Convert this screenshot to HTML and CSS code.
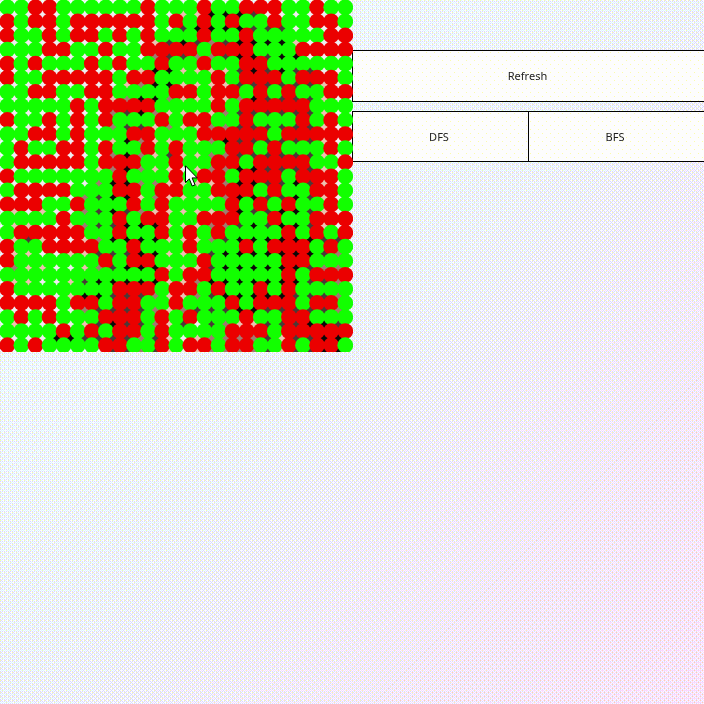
FILE: index.html
```html
<!DOCTYPE html>
<html lang="en">
<head>
<meta charset="utf-8">
<title>Maze search</title>
<link rel="stylesheet" href="styles.css">
</head>
<body>
<canvas id="backdrop" class="backdrop" width="704" height="704"></canvas>
<main class="app">
  <section class="board">
    <svg id="grid" class="grid" viewBox="0 0 353 352" width="353" height="352"></svg>
    <svg class="cursor" width="14" height="22" viewBox="0 0 14 22"><path d="M.5.8V17.5L4.3 13.9 7.2 21 10 19.8 7.1 12.9H12.2Z" fill="#fff" stroke="#000"/></svg>
  </section>
  <aside class="controls">
    <button class="btn">Refresh</button>
    <div class="row">
      <button class="btn">DFS</button>
      <button class="btn">BFS</button>
    </div>
  </aside>
</main>
<script src="grid.js"></script>
</body>
</html>
```
FILE: styles.css
```css
* { box-sizing: border-box; }
html, body { margin: 0; height: 100%; overflow: hidden; }
body {
  background: linear-gradient(135deg, #f0ffff 0%, #f0f0fa 50%, #fbe4f6 100%);
}
.backdrop { position: absolute; left: 0; top: 0; }
.app { position: relative; display: flex; width: 704px; height: 704px; }
.board { position: relative; z-index: 1; width: 352px; height: 352px; }
.grid { display: block; }
.cursor { position: absolute; left: 185px; top: 165px; }
.controls {
  width: 352px;
  padding-top: 50px;
  display: flex;
  flex-direction: column;
  gap: 9px;
}
.btn {
  display: block;
  width: 100%;
  height: 52px;
  margin: 0;
  padding: 0 2px 1px 0;
  border: 1px solid #000;
  border-right: 0;
  border-radius: 0;
  background:
    radial-gradient(circle at 1.5px 1.5px, #fcfcaa 0.75px, transparent 0.76px) 0 0 / 8px 8px,
    radial-gradient(circle at 1.5px 1.5px, #fcfcaa 0.75px, transparent 0.76px) 4px 4px / 8px 8px,
    #fdfdfd;
  color: #222;
  font: 11px "Noto Sans", "Open Sans", sans-serif;
}
.row { display: flex; }
.row .btn { width: 176px; height: 51px; padding-right: 3px; }
```
FILE: grid.js
```js
const N = 25, SIZE = 352, STEP = SIZE / N;

// Columns holding a wall, one list per row
const walls = [
  [2,3,10,14,17,18,19,22],
  [0,2,3,5,6,7,8,9,10,12,14,16,19,22,23],
  [0,3,5,6,8,10,14,17,23,24],
  [3,4,7,10,11,12,13,15,16,17,21,22,23,24],
  [0,2,6,8,11,14,17,18],
  [0,3,4,5,6,7,9,10,15,17,18,19,21,22,23],
  [2,3,6,7,12,13,15,16,18,20,23,24],
  [5,7,8,9,10,15,17,18,19,20,21],
  [0,3,5,7,11,13,14,17,21,23],
  [2,3,5,9,10,14,15,16,17,18,20,21,22,23,24],
  [1,4,5,7,10,12,16,17,19,23],
  [1,2,3,4,5,7,8,9,12,15,16,18,19,20,21,24],
  [0,8,12,14,15,17,18,19,21,22,23],
  [1,2,3,4,8,9,11,12,15,16,17,19,22,23],
  [0,1,2,5,9,11,16,18,20,23],
  [4,8,10,11,14,15,16,19,22,23,24],
  [1,2,3,4,5,8,11,13,15,20,22,24],
  [0,3,4,5,6,9,13,17,19,20,21,23],
  [0,7,9,10,14,20,21],
  [11,13,14,20,22,23,24],
  [0,8,9,10,12,13,15,18,20],
  [0,1,2,3,5,6,8,9,12,16,18,19,20,22,23],
  [1,3,7,8,9,11,13,17,20,21],
  [4,6,8,9,11,16,17,18,20,21,22,23,24],
  [0,2,7,8,11,13,14,16,17,20,22,23]
];

// Tones of the backdrop at the inner grid corners
const tones = [
  'WWWWWWWWWWWWPPKKKDWWWWWW',
  'WWWWWWWWWWWWDKKKKDDDWWWW',
  'WWWWWWWWWWPDKDNDKKKKPWWW',
  'WWWWWWWWWWNDDNNDKKDKKWWW',
  'WWWWWWWWWPKKPPPPDKDKDDWW',
  'WWWWWWWWPNKKPPPPDDDDDDPW',
  'WWWWWWWPNKKNPPPPNKDDDDPW',
  'WWWWWWWNDKNPPPPNDDDDDDPW',
  'WWWWWWWNDDPNPPNNDDDDDDPW',
  'WWWWWWWPKNPPPPNKDDDDDDPW',
  'WWWWWWWNKNPDPPNNDDDDDDPW',
  'WWWWWWPNKNPPWPNNKKDDDDPW',
  'WWWWWWNKKNNPPPPNKKDDKDPW',
  'WWWWWNDKKPNPPPPNKKDDKDPW',
  'PWPWWNDKDNPPPPPNKDDKKDPW',
  'PPWWPNDDKKKPPPNNDKDKKDPW',
  'PDPWWPNKKKKPPPNDKKKKKKDD',
  'PPWWPPDDDKKPPPDKKKKKKKDN',
  'NPPWWPNDKKKPPPDKKKKKKDNN',
  'PPWWPDKKKKKPPNKKKKKKKDDN',
  'WWWWPKKDDDNPPNDKKKKKDDDN',
  'WWWWWNDDDDNPNDDDKKDDDDDN',
  'PWWWWPDKDDNPDWDNPPDDDKKD',
  'WWWKKDDDDNDPWPNNNNDPDDKK'
];
const fill = { W: '#f0ecf0', P: '#ecc0b0', N: '#a07a70', D: '#4a3a38', K: '#0c0808' };

let out = '';
const box = (x, y, c) =>
  `<rect x="${x * STEP - 7}" y="${y * STEP - 7}" width="14.2" height="14.2" fill="${c}"/>`;
for (let j = 0; j <= N; j++) {
  for (let i = 0; i <= N; i++) {
    if (i === 0 || j === 0 || i === N) continue;
    if (j === N && i < 8) continue;
    out += box(i, j, fill[tones[Math.min(j, 24) - 1][i - 1]]);
  }
}
for (let j = 0; j < N; j++) {
  for (let i = 0; i < N; i++) {
    const c = walls[j].includes(i) ? '#eb0000' : '#12ff00';
    out += `<circle cx="${(i + .5) * STEP + .3}" cy="${(j + .5) * STEP + .3}" r="7.9" fill="${c}"/>`;
  }
}
document.getElementById('grid').innerHTML = out;

// Diagonal gradient reduced to a 3-3-2 bit palette with 8x8 ordered dithers
const W = 704;
const stops = [[242, 255, 252], [241, 245, 248], [252, 231, 248]];
const fine = [
  [17, 9, 23, 15, 16, 8, 22, 14],
  [5, 29, 3, 27, 4, 28, 2, 26],
  [21, 13, 19, 11, 20, 12, 18, 10],
  [0, 24, 6, 30, 1, 25, 7, 31],
  [16, 8, 22, 14, 17, 9, 23, 15],
  [4, 28, 2, 26, 5, 29, 3, 27],
  [20, 12, 18, 10, 21, 13, 19, 11],
  [1, 25, 7, 31, 0, 24, 6, 30]
];
const coarse = [
  [0, 55, 14, 68, 3, 58, 17, 72],
  [37, 18, 50, 32, 40, 22, 54, 35],
  [9, 64, 5, 59, 13, 67, 8, 63],
  [46, 27, 41, 23, 49, 31, 44, 26],
  [2, 57, 16, 71, 1, 56, 15, 70],
  [39, 21, 52, 34, 38, 19, 51, 33],
  [11, 66, 7, 62, 10, 65, 6, 60],
  [48, 30, 43, 25, 47, 29, 42, 24]
];
const ctx = document.getElementById('backdrop').getContext('2d');
const img = ctx.createImageData(W, W);
for (let y = 0; y < W; y++) {
  for (let x = 0; x < W; x++) {
    const t = (x + y) / W;
    const a = stops[t < 1 ? 0 : 1], b = stops[t < 1 ? 1 : 2], f = t % 1;
    const p = (y * W + x) * 4;
    for (let c = 0; c < 3; c++) {
      const v = a[c] + (b[c] - a[c]) * f;
      const n = c === 2 ? 3 : 7, s = c === 2 ? 85 : 36;
      const d = c === 2 ? coarse[y & 7][x & 7] / 73 : fine[y & 7][x & 7] / 32;
      img.data[p + c] = Math.min(n, Math.floor(v / 256 * n + d)) * s;
    }
    img.data[p + 3] = 255;
  }
}
ctx.putImageData(img, 0, 0);
```
